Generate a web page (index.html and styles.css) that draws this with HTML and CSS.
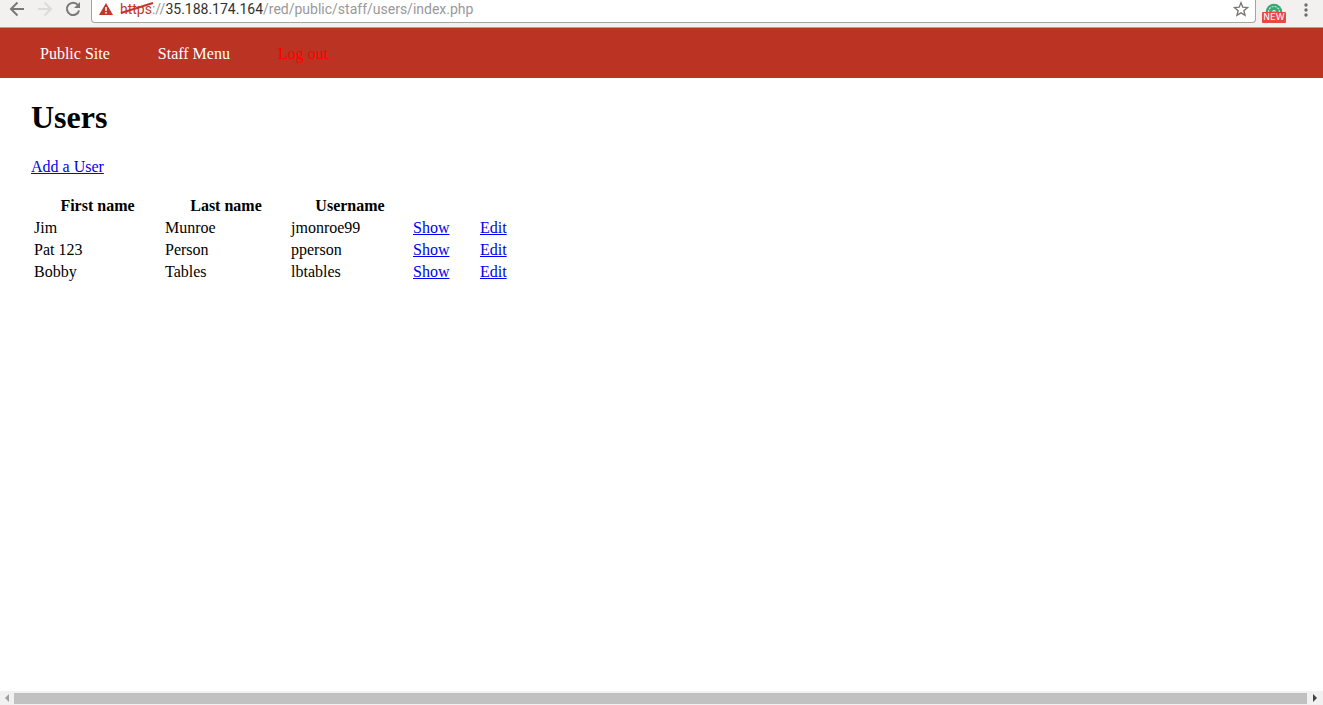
FILE: index.html
```html
<!DOCTYPE html>
<html lang="en">
<head>
<meta charset="utf-8">
<title>Users</title>
<link rel="stylesheet" href="styles.css">
</head>
<body>
<div class="toolbar">
  <div class="nav-buttons">
    <button class="tool" aria-label="Back"><svg width="16" height="16" viewBox="0 0 16 16" fill="none" stroke="#7b7977" stroke-width="2"><path d="M15 8H2.500M8.500 1.500L2 8l6.500 6.500"/></svg></button>
    <button class="tool" aria-label="Forward" disabled><svg width="16" height="16" viewBox="0 0 16 16" fill="none" stroke="#dddbd9" stroke-width="2"><path d="M1 8h12.500M7.500 1.500L14 8l-6.500 6.500"/></svg></button>
    <button class="tool" aria-label="Reload"><svg width="16" height="16" viewBox="0 0 16 16"><path d="M13 4A6.200 6.200 0 1 0 14.100 9.500" fill="none" stroke="#7b7977" stroke-width="2"/><path d="M15 1v6H9z" fill="#7b7977"/></svg></button>
  </div>
  <div class="address">
    <svg class="warning" width="14" height="12" viewBox="0 0 14 12"><path d="M7 0l7 12H0z" fill="#c6352a"/><path d="M6.200 4h1.600v4H6.200zM6.200 9h1.600v1.600H6.200z" fill="#fff"/></svg>
    <div class="url" role="textbox" aria-label="Address" contenteditable="true" spellcheck="false"><span class="scheme">https<svg class="strike" viewBox="0 0 34 12" preserveAspectRatio="none"><path d="M1 11L33 1" stroke="#c6352a" stroke-width="2"/></svg></span>://<span class="host">35.188.174.164</span>/red/public/staff/users/index.php</div>
    <button class="tool" aria-label="Bookmark"><svg width="16" height="16" viewBox="0 0 16 16"><path d="M8 1.800l1.800 4.400 4.700.4-3.600 3.100 1.100 4.600L8 11.800l-4 2.500 1.100-4.600-3.600-3.100 4.700-.4z" fill="none" stroke="#7b7977" stroke-width="1.400"/></svg></button>
  </div>
  <button class="extension" aria-label="Extension">
    <svg width="18" height="18" viewBox="0 0 18 18"><circle cx="9" cy="9" r="8.300" fill="#3aa876"/><path d="M3.500 9a5.500 5.500 0 0 1 11 0" fill="none" stroke="#bfe5d1" stroke-width="1.200" stroke-dasharray="2 1"/><path d="M6 10h2V7.500h2V10h2" fill="none" stroke="#d5eee0"/></svg>
    <span class="badge">NEW</span>
  </button>
  <button class="menu" aria-label="Menu"><svg width="4" height="14" viewBox="0 0 4 14" fill="#6e6e6e"><circle cx="2" cy="2" r="1.700"/><circle cx="2" cy="7" r="1.700"/><circle cx="2" cy="12" r="1.700"/></svg></button>
</div>
<nav class="site-nav">
  <a href="#">Public Site</a>
  <a href="#">Staff Menu</a>
  <a class="logout" href="#">Log out</a>
</nav>
<main class="content">
  <h1>Users</h1>
  <a href="#">Add a User</a>
  <table class="users">
    <colgroup><col class="first"><col class="last"><col class="username"><col class="show"><col class="edit"></colgroup>
    <thead><tr><th>First name</th><th>Last name</th><th>Username</th><th></th><th></th></tr></thead>
    <tbody>
      <tr><td>Jim</td><td>Munroe</td><td>jmonroe99</td><td><a href="#">Show</a></td><td><a href="#">Edit</a></td></tr>
      <tr><td>Pat 123</td><td>Person</td><td>pperson</td><td><a href="#">Show</a></td><td><a href="#">Edit</a></td></tr>
      <tr><td>Bobby</td><td>Tables</td><td>lbtables</td><td><a href="#">Show</a></td><td><a href="#">Edit</a></td></tr>
    </tbody>
  </table>
</main>
<div class="scrollbar">
  <button class="arrow" aria-label="Scroll left"><svg width="4" height="8" viewBox="0 0 4 8"><path d="M4 0v8L0 4z" fill="#a0a0a0"/></svg></button>
  <div class="thumb"></div>
  <button class="arrow right" aria-label="Scroll right"><svg width="4" height="8" viewBox="0 0 4 8"><path d="M0 0v8l4-4z" fill="#404040"/></svg></button>
</div>
</body>
</html>
```
FILE: styles.css
```css
* { box-sizing: border-box; }
body {
  display: flex;
  flex-direction: column;
  min-height: 100vh;
  margin: 0;
  background: #fff;
  color: #000;
  font: 16px "Liberation Serif", serif;
}
button {
  padding: 0;
  border: 0;
  background: none;
}
svg { display: block; }

.toolbar {
  display: flex;
  align-items: flex-start;
  height: 28px;
  padding-right: 15px;
  border-bottom: 1px solid #a9a4a2;
  background: #f3f1ef;
}
.nav-buttons {
  display: flex;
  gap: 12px;
  padding: 1px 10px 0 9px;
}
.address {
  display: flex;
  flex: 1;
  align-items: flex-start;
  height: 23px;
  padding: 1px 6px 0 7px;
  border: 1px solid #a5a4a2;
  border-top: 0;
  border-radius: 0 0 4px 4px;
  background: #fff;
}
.warning { margin: 2px 7px 0 0; }
.url {
  flex: 1;
  color: #999;
  font: 14px/16px Roboto, sans-serif;
  white-space: nowrap;
}
.scheme {
  position: relative;
  color: #c6352a;
}
.strike {
  position: absolute;
  top: 1px;
  left: 0;
  width: 34px;
  height: 12px;
}
.host { color: #303030; }
.extension {
  position: relative;
  width: 24px;
  height: 23px;
  margin-left: 6px;
}
.extension svg { margin: 0 auto; }
.badge {
  position: absolute;
  right: 0;
  bottom: 0;
  left: 0;
  border-radius: 1px;
  background: #e9473f;
  color: #fff;
  font: 9px/11px "DejaVu Sans", sans-serif;
}
.menu { margin: 3px 0 0 18px; }

.site-nav {
  display: flex;
  align-items: center;
  gap: 48px;
  height: 50px;
  padding: 2px 40px 0;
  background: #ba3323;
}
.site-nav a {
  color: #fff;
  text-decoration: none;
}
.site-nav .logout { color: #f00; }

.content {
  flex: 1;
  padding: 21px 31px;
}
.content a { color: #00e; }
h1 {
  margin: 0 0 22px;
  font-size: 32px;
  line-height: 37px;
}
.users {
  margin-top: 18px;
  border-spacing: 2px;
}
.users th, .users td { padding: 1px; }
.first { width: 129px; }
.last { width: 124px; }
.username { width: 120px; }
.show { width: 65px; }
.edit { width: 65px; }

.scrollbar {
  display: flex;
  align-items: center;
  height: 14px;
  background: #f1f1f1;
}
.arrow {
  display: flex;
  justify-content: center;
  width: 14px;
}
.arrow.right { width: 16px; }
.thumb {
  flex: 1;
  height: 11px;
  background: #c1c1c1;
}
```
